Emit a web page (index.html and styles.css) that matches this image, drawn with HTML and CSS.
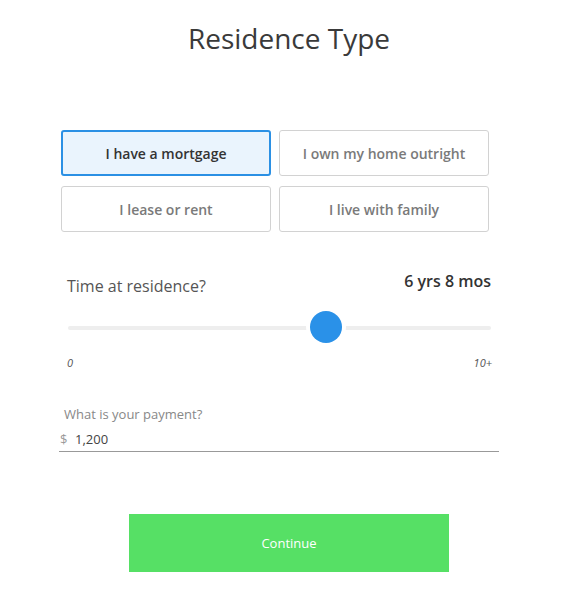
FILE: index.html
```html
<!DOCTYPE html>
<html>
<head>
<meta charset="utf-8">
<link rel="stylesheet" href="styles.css">
</head>
<body>
<div class="page">
  <h1 class="title">Residence Type</h1>
  <div class="options">
    <div class="option selected">I have a mortgage</div>
    <div class="option">I own my home outright</div>
    <div class="option">I lease or rent</div>
    <div class="option">I live with family</div>
  </div>
  <div class="time-head">
    <span class="time-label">Time at residence?</span>
    <span class="time-value">6 yrs 8 mos</span>
  </div>
  <div class="slider">
    <div class="track"></div>
    <div class="thumb"></div>
  </div>
  <div class="scale">
    <span>0</span>
    <span>10+</span>
  </div>
  <div class="payment">
    <div class="pay-label">What is your payment?</div>
    <div class="pay-row">
      <span class="currency">$</span>
      <span class="pay-value">1,200</span>
    </div>
  </div>
  <button class="continue">Continue</button>
</div>
</body>
</html>
```
FILE: styles.css
```css
* { box-sizing: border-box; }
body {
  margin: 0;
  background: #fff;
  font-family: "Open Sans", "Liberation Sans", sans-serif;
}
.page {
  padding-top: 20px;
}
.title {
  margin: 0;
  width: 578px;
  font-size: 28px;
  line-height: 37px;
  font-weight: 400;
  color: #3a3a3a;
  text-align: center;
}
.options {
  display: grid;
  grid-template-columns: 210px 210px;
  grid-auto-rows: 46px;
  column-gap: 8px;
  row-gap: 10px;
  margin: 73px 0 0 61px;
}
.option {
  display: flex;
  align-items: center;
  justify-content: center;
  border: 1px solid #d2d2d2;
  border-radius: 3px;
  background: #fff;
  font-size: 14px;
  font-weight: 600;
  color: #7a7a7a;
}
.option.selected {
  border: 2px solid #2b90e4;
  background: #eaf4fd;
  color: #333;
}
.time-head {
  display: flex;
  justify-content: space-between;
  align-items: flex-start;
  margin: 38px 0 0 67px;
  width: 424px;
  line-height: 22px;
  font-size: 16px;
}
.time-label {
  padding-top: 5px;
  color: #555;
}
.time-value {
  font-weight: 600;
  color: #333;
}
.slider {
  position: relative;
  height: 32px;
  width: 423px;
  margin: 14px 0 0 68px;
}
.track {
  position: absolute;
  left: 0;
  right: 0;
  top: 15px;
  height: 4px;
  border-radius: 2px;
  background: #eeeeee;
}
.thumb {
  position: absolute;
  left: 242px;
  top: 0;
  width: 32px;
  height: 32px;
  border-radius: 50%;
  background: #2a91e8;
  box-shadow: 0 0 0 4px #fff;
}
.scale {
  display: flex;
  justify-content: space-between;
  width: 425px;
  margin: 12px 0 0 67px;
  font-size: 11px;
  line-height: 15px;
  font-style: italic;
  color: #555;
}
.payment {
  margin: 35px 0 0 59px;
  width: 440px;
}
.pay-label {
  padding-left: 5px;
  font-size: 13px;
  line-height: 18px;
  color: #888;
}
.pay-row {
  display: flex;
  margin-top: 7px;
  padding: 0 0 3px 1px;
  border-bottom: 1px solid #999;
  font-size: 13px;
  line-height: 18px;
}
.currency {
  width: 15px;
  color: #999;
}
.pay-value {
  color: #444;
}
.continue {
  display: block;
  margin: 62px 0 0 129px;
  width: 320px;
  height: 58px;
  border: none;
  background: #56e065;
  color: #fff;
  font-family: "Open Sans", "Liberation Sans", sans-serif;
  font-size: 13px;
  padding: 0;
}
```
